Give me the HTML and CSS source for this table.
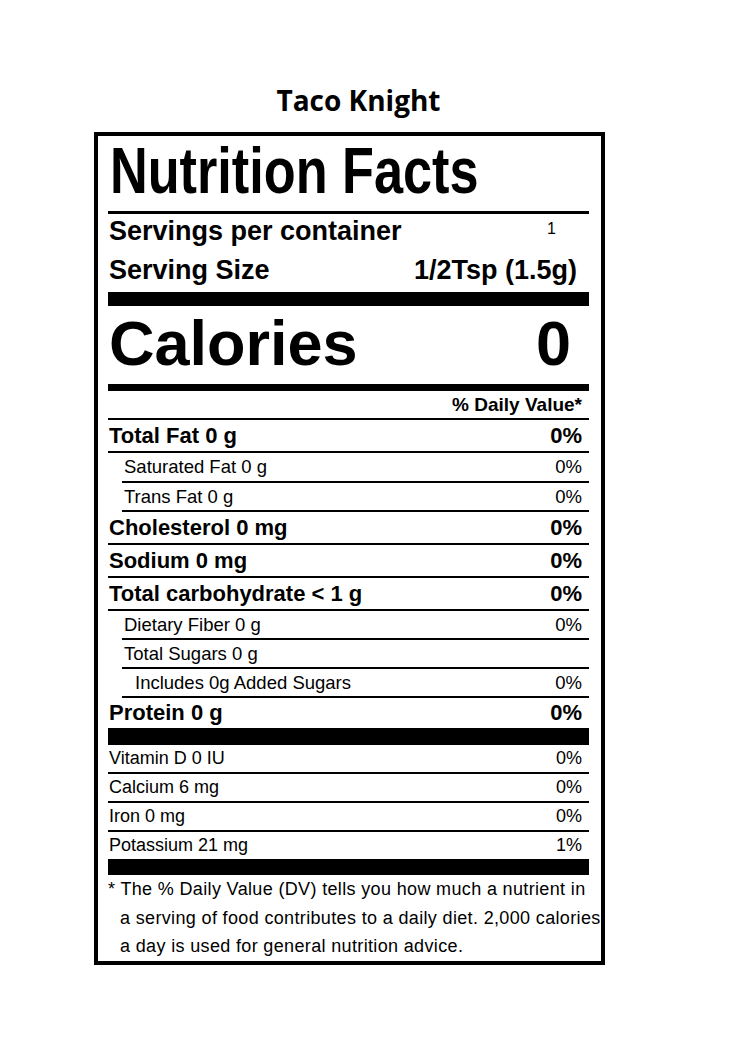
FILE: index.html
```html
<!DOCTYPE html>
<html lang="en">
<head>
<meta charset="utf-8">
<title>Taco Knight Nutrition Facts</title>
<link rel="stylesheet" href="styles.css">
</head>
<body>
<div class="page">
  <h2 class="title">Taco Knight</h2>
  <section class="label">
    <h1 class="nf"><span class="nf-text">Nutrition Facts</span></h1>
    <div class="servings">
      <div class="srow"><span>Servings per container</span><span class="count">1</span></div>
      <div class="srow second"><span>Serving Size</span><span class="size">1/2Tsp (1.5g)</span></div>
    </div>
    <div class="calories"><span>Calories</span><span class="cal-val">0</span></div>
    <div class="dv-head">% Daily Value*</div>

    <div class="row major"><span>Total Fat 0 g</span><span>0%</span></div>
    <div class="row minor indent tall"><span>Saturated Fat 0 g</span><span>0%</span></div>
    <div class="row minor indent"><span>Trans Fat 0 g</span><span>0%</span></div>
    <div class="row major"><span>Cholesterol 0 mg</span><span>0%</span></div>
    <div class="row major"><span>Sodium 0 mg</span><span>0%</span></div>
    <div class="row major"><span>Total carbohydrate &lt; 1 g</span><span>0%</span></div>
    <div class="row minor indent"><span>Dietary Fiber 0 g</span><span>0%</span></div>
    <div class="row minor indent"><span>Total Sugars 0 g</span><span></span></div>
    <div class="row minor indent deep"><span>Includes 0g Added Sugars</span><span>0%</span></div>
    <div class="row major protein"><span>Protein 0 g</span><span>0%</span></div>

    <div class="row minor vit"><span>Vitamin D 0 IU</span><span>0%</span></div>
    <div class="row minor vit"><span>Calcium 6 mg</span><span>0%</span></div>
    <div class="row minor vit"><span>Iron 0 mg</span><span>0%</span></div>
    <div class="row minor vit last"><span>Potassium 21 mg</span><span>1%</span></div>

    <p class="foot">* The % Daily Value (DV) tells you how much a nutrient in<br>a serving of food contributes to a daily diet. 2,000 calories<br>a day is used for general nutrition advice.</p>
  </section>
</div>
</body>
</html>
```
FILE: styles.css
```css
html, body {
  margin: 0;
  padding: 0;
  background: #fff;
  color: #000;
}

.page {
  padding-top: 85px;
  font-family: "Liberation Sans", Arial, sans-serif;
}

.title {
  margin: 0;
  padding-right: 14px;
  text-align: center;
  font-family: "Open Sans", sans-serif;
  font-weight: 700;
  font-size: 28px;
  line-height: 31px;
}

.label {
  margin: 16px 0 0 94px;
  border: 4px solid #000;
  padding: 0 12px 0 10px;
  box-sizing: border-box;
  width: 511px;
}

.nf {
  margin: 0;
  padding: 3px 0 8px 2px;
  border-bottom: 3px solid #000;
  font-size: 64px;
  line-height: 64px;
  font-weight: 700;
  white-space: nowrap;
}

.nf-text {
  display: inline-block;
  transform: scaleX(0.816);
  transform-origin: left center;
}

.servings {
  padding: 2px 0 7px 1px;
  border-bottom: 14px solid #000;
  font-size: 27px;
  font-weight: 700;
}

.srow {
  display: flex;
  justify-content: space-between;
  align-items: flex-start;
  line-height: 30px;
}

.srow.second {
  margin-top: 9px;
}

.count {
  font-size: 16px;
  font-weight: 400;
  line-height: 26px;
  padding-right: 33px;
}

.size {
  padding-right: 12px;
}

.calories {
  display: flex;
  justify-content: space-between;
  padding: 6px 18px 9px 1px;
  border-bottom: 7px solid #000;
  font-size: 63px;
  line-height: 63px;
  font-weight: 700;
}

.dv-head {
  height: 27px;
  line-height: 27px;
  text-align: right;
  padding-right: 7px;
  border-bottom: 2px solid #000;
  font-size: 19px;
  font-weight: 700;
}

.row {
  display: flex;
  justify-content: space-between;
  align-items: center;
  padding-right: 7px;
  border-bottom: 2px solid #000;
  white-space: nowrap;
}

.row.major {
  height: 31px;
  line-height: 31px;
  font-size: 22px;
  font-weight: 700;
  padding-left: 1px;
}

.row.minor {
  height: 27px;
  line-height: 27px;
  font-size: 18.5px;
  font-weight: 400;
}

.row.minor.tall {
  height: 28px;
  line-height: 28px;
}

.row.indent {
  margin-left: 14px;
  padding-left: 2px;
}

.row.indent.deep {
  padding-left: 13px;
}

.row.protein {
  height: 30px;
  line-height: 30px;
  border-bottom: 17px solid #000;
}

.row.vit {
  font-size: 18px;
  padding-left: 1px;
}

.row.vit.last {
  border-bottom: 16px solid #000;
}

.foot {
  margin: 0;
  padding-left: 12px;
  text-indent: -12px;
  font-size: 18px;
  letter-spacing: 0.35px;
  line-height: 28.5px;
  white-space: nowrap;
}
```
